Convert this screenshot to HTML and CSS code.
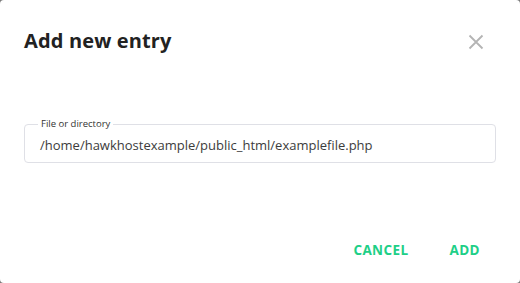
FILE: index.html
```html
<!DOCTYPE html>
<html>
<head>
<meta charset="utf-8">
<link rel="stylesheet" href="styles.css">
</head>
<body>
<div class="dialog">
  <div class="header">
    <h1 class="title">Add new entry</h1>
    <button class="close" aria-label="Close">
      <svg width="16" height="16" viewBox="0 0 16 16"><path d="M1.5 1.5 L14.5 14.5 M14.5 1.5 L1.5 14.5" stroke="#b4b4b4" stroke-width="1.8" fill="none"/></svg>
    </button>
  </div>
  <div class="content">
    <div class="field">
      <span class="label">File or directory</span>
      <div class="value">/home/hawkhostexample/public_html/examplefile.php</div>
    </div>
  </div>
  <div class="actions">
    <button class="btn">CANCEL</button>
    <button class="btn">ADD</button>
  </div>
</div>
</body>
</html>
```
FILE: styles.css
```css
html, body {
  margin: 0;
  padding: 0;
  background: #7a7a7a;
}
body {
  font-family: "Open Sans", "Noto Sans", sans-serif;
  width: 520px;
  height: 283px;
}
.dialog {
  width: 520px;
  height: 283px;
  box-sizing: border-box;
  background: #fff;
  border-radius: 4px;
  display: flex;
  flex-direction: column;
}
.header {
  display: flex;
  align-items: center;
  justify-content: space-between;
  padding: 26px 36px 0 24px;
  height: 28px;
}
.title {
  margin: 0;
  font-size: 20px;
  font-weight: 700;
  color: #222;
  letter-spacing: 0.15px;
}
.close {
  border: 0;
  background: none;
  padding: 0;
  width: 16px;
  height: 16px;
  display: flex;
  margin-top: 4px;
}
.content {
  padding: 70px 24px 0 24px;
}
.field {
  position: relative;
  border: 1px solid #dfe0e6;
  border-radius: 4px;
  height: 39px;
  box-sizing: border-box;
  display: flex;
  align-items: center;
  padding: 2px 15px 0 15px;
}
.label {
  position: absolute;
  top: -6px;
  left: 13px;
  background: #fff;
  font-size: 9.5px;
  color: #333;
  padding: 0 3px;
  line-height: 10px;
}
.value {
  font-size: 13px;
  color: #3c3c3c;
  line-height: 18px;
}
.actions {
  margin-top: auto;
  display: flex;
  justify-content: flex-end;
  gap: 41px;
  padding: 0 40px 24px 0;
}
.btn {
  border: 0;
  background: none;
  padding: 0;
  font-family: "Open Sans", sans-serif;
  font-weight: 700;
  font-size: 13.5px;
  color: #1ecf87;
  letter-spacing: 0.4px;
}
```
